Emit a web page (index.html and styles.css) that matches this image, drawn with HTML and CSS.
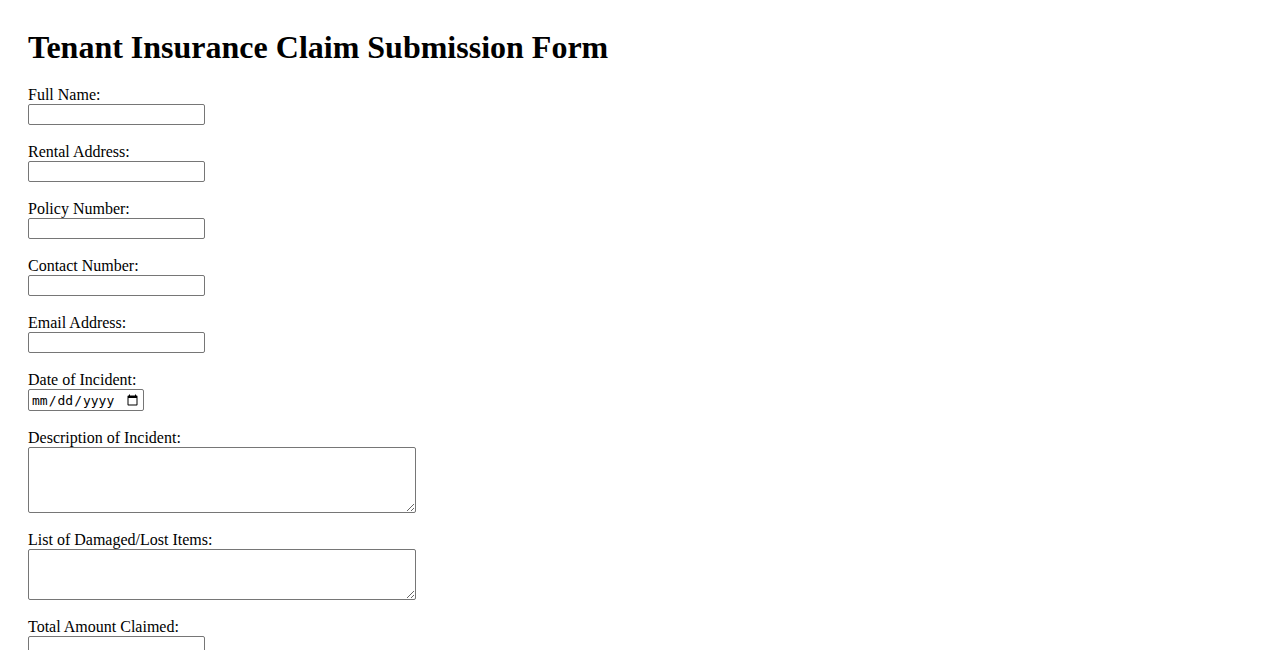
FILE: index.html
```html
<!DOCTYPE html>
<html lang="en">
<head>
<meta charset="utf-8">
<title>Tenant Insurance Claim Submission Form</title>
<link rel="stylesheet" href="styles.css">
</head>
<body>
<main class="page">
  <h1 class="title">Tenant Insurance Claim Submission Form</h1>
  <form class="claim-form">
    <div class="field">
      <label class="field-label" for="fullName">Full Name:</label>
      <input class="text-input" type="text" id="fullName">
    </div>
    <div class="field">
      <label class="field-label" for="address">Rental Address:</label>
      <input class="text-input" type="text" id="address">
    </div>
    <div class="field">
      <label class="field-label" for="policy">Policy Number:</label>
      <input class="text-input" type="text" id="policy">
    </div>
    <div class="field">
      <label class="field-label" for="contact">Contact Number:</label>
      <input class="text-input" type="text" id="contact">
    </div>
    <div class="field">
      <label class="field-label" for="email">Email Address:</label>
      <input class="text-input" type="text" id="email">
    </div>
    <div class="field">
      <label class="field-label" for="date">Date of Incident:</label>
      <input class="date-input" type="date" id="date">
    </div>
    <div class="field">
      <label class="field-label" for="description">Description of Incident:</label>
      <textarea class="area area-tall" id="description"></textarea>
    </div>
    <div class="field">
      <label class="field-label" for="items">List of Damaged/Lost Items:</label>
      <textarea class="area area-short" id="items"></textarea>
    </div>
    <div class="field">
      <label class="field-label" for="amount">Total Amount Claimed:</label>
      <input class="text-input" type="text" id="amount">
    </div>
    <div class="field">
      <button class="submit" type="submit">Submit Claim</button>
    </div>
  </form>
</main>
</body>
</html>
```
FILE: styles.css
```css
html, body {
  margin: 0;
  padding: 0;
  background: #ffffff;
}

body {
  font-family: "Liberation Serif", "Times New Roman", serif;
  font-size: 16px;
  color: #000000;
}

.page {
  padding: 29px 28px;
}

.title {
  font-family: "Liberation Serif", "Times New Roman", serif;
  font-size: 32px;
  font-weight: bold;
  line-height: 37px;
  margin: 0 0 20px 0;
}

.claim-form {
  display: flex;
  flex-direction: column;
  align-items: flex-start;
}

.field {
  display: flex;
  flex-direction: column;
  align-items: flex-start;
  margin-bottom: 18px;
}

.field-label {
  display: block;
  line-height: 18px;
  height: 18px;
}

.text-input,
.date-input,
.area {
  box-sizing: border-box;
  margin: 0;
  border: 1px solid #767676;
  border-radius: 2px;
  background: #ffffff;
  padding: 1px 2px;
}

.text-input {
  width: 177px;
  height: 21px;
  font-family: "Liberation Sans", Arial, sans-serif;
  font-size: 13.33px;
}

.date-input {
  width: 116px;
  height: 22px;
  font-family: "DejaVu Sans Mono", "Liberation Mono", monospace;
  font-size: 13px;
}

.area {
  width: 388px;
  resize: both;
  font-family: "Liberation Mono", monospace;
  font-size: 13px;
}

.area-tall {
  height: 66px;
}

.area-short {
  height: 51px;
}

.submit {
  font-family: "Liberation Sans", Arial, sans-serif;
  font-size: 13.33px;
}
```
